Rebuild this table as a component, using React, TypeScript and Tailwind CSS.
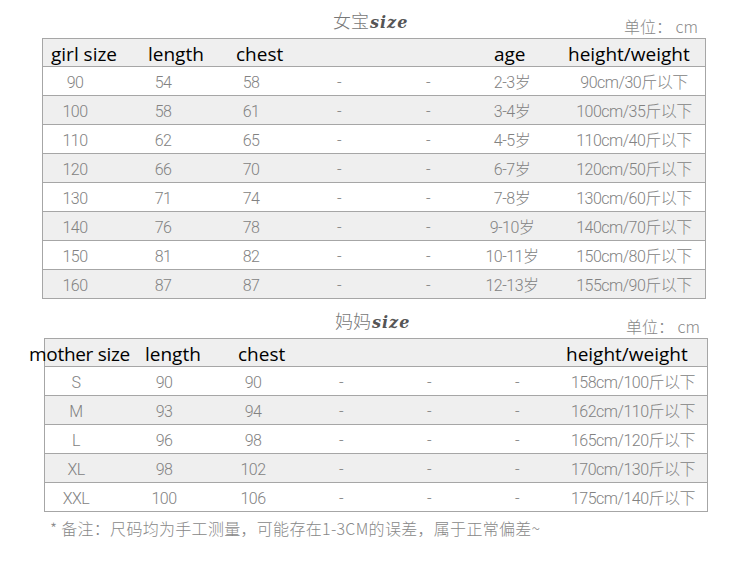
import React from 'react';

const bodyFont = "font-['Roboto','Noto_Sans_CJK_SC',sans-serif]";
const headFont = "font-['Open_Sans','Noto_Sans_CJK_SC',sans-serif]";

type Row = string[];

const girlRows: Row[] = [
  ['90', '54', '58', '-', '-', '2-3岁', '90cm/30斤以下'],
  ['100', '58', '61', '-', '-', '3-4岁', '100cm/35斤以下'],
  ['110', '62', '65', '-', '-', '4-5岁', '110cm/40斤以下'],
  ['120', '66', '70', '-', '-', '6-7岁', '120cm/50斤以下'],
  ['130', '71', '74', '-', '-', '7-8岁', '130cm/60斤以下'],
  ['140', '76', '78', '-', '-', '9-10岁', '140cm/70斤以下'],
  ['150', '81', '82', '-', '-', '10-11岁', '150cm/80斤以下'],
  ['160', '87', '87', '-', '-', '12-13岁', '155cm/90斤以下'],
];

const motherRows: Row[] = [
  ['S', '90', '90', '-', '-', '-', '158cm/100斤以下'],
  ['M', '93', '94', '-', '-', '-', '162cm/110斤以下'],
  ['L', '96', '98', '-', '-', '-', '165cm/120斤以下'],
  ['XL', '98', '102', '-', '-', '-', '170cm/130斤以下'],
  ['XXL', '100', '106', '-', '-', '-', '175cm/140斤以下'],
];

const Title = ({ cn }: { cn: string }) => (
  <div className="relative h-[38px]">
    <div className="absolute left-[291px] top-[11px] flex items-baseline">
      <span className="font-['Noto_Sans_CJK_SC',sans-serif] text-[18px] font-light leading-none text-[#777]">{cn}</span>
      <span className="ml-[1px] font-['DejaVu_Serif',serif] text-[16px] font-bold italic leading-none tracking-[1px] text-[#555]">size</span>
    </div>
    <div className="absolute right-[8px] top-[18px] font-['Noto_Sans_CJK_SC',sans-serif] text-[16px] font-light leading-none text-[#888]">
      单位：&nbsp;cm
    </div>
  </div>
);

const SizeTable = ({
  rows,
  header,
  cols,
  lastCell,
}: {
  rows: Row[];
  header: React.ReactNode;
  cols: string;
  lastCell: string;
}) => (
  <div className="w-[664px] border border-[#a6a6a6]">
    <div className="flex h-[28px] items-center border-b border-[#a6a6a6] bg-[#efefef]">{header}</div>
    {rows.map((r, i) => (
      <div
        key={i}
        className={`grid ${cols} items-center ${i < rows.length - 1 ? 'h-[29px] border-b border-[#a6a6a6]' : 'h-[28px]'} ${
          i % 2 === 0 ? 'bg-white' : 'bg-[#efefef]'
        }`}
      >
        {r.map((c, j) => (
          <div
            key={j}
            className={`whitespace-nowrap text-center ${bodyFont} pt-[4px] text-[16px] font-light leading-none tracking-[-0.5px] text-[#828282] ${
              j === r.length - 1 ? lastCell : ''
            }`}
          >
            {c}
          </div>
        ))}
      </div>
    ))}
  </div>
);

export default function App() {
  return (
    <div className="h-[569px] w-[750px] bg-white">
      <div className="ml-[42px] w-[664px]">
        <Title cn="女宝" />
        <SizeTable
          rows={girlRows}
          lastCell=""
          cols="grid-cols-[64px_112px_64px_112px_66px_102px_142px]"
          header={
            <div className={`flex pt-[4px] ${headFont} text-[19px] leading-none text-black`}>
              <span className="ml-[8px] w-[97px]">girl size</span>
              <span className="w-[88px]">length</span>
              <span className="w-[258px]">chest</span>
              <span className="w-[74px]">age</span>
              <span>height/weight</span>
            </div>
          }
        />
      </div>
      <div className="ml-[44px] mt-[1px] w-[664px]">
        <Title cn="妈妈" />
        <SizeTable
          rows={motherRows}
          lastCell="-translate-x-[7px]"
          cols="grid-cols-[62px_114px_64px_112px_64px_112px_134px]"
          header={
            <div className={`flex pt-[4px] ${headFont} text-[19px] leading-none text-black`}>
              <span className="-ml-[16px] w-[116px] whitespace-nowrap tracking-[-0.3px]">mother size</span>
              <span className="w-[93px]">length</span>
              <span className="w-[328px]">chest</span>
              <span>height/weight</span>
            </div>
          }
        />
        <div className="mt-[8px] ml-[6px] font-['Noto_Sans_CJK_SC',sans-serif] text-[16px] font-light leading-none tracking-[0.3px] text-[#888]">
          *&nbsp;备注：尺码均为手工测量，可能存在1-3CM的误差，属于正常偏差~
        </div>
      </div>
    </div>
  );
}
